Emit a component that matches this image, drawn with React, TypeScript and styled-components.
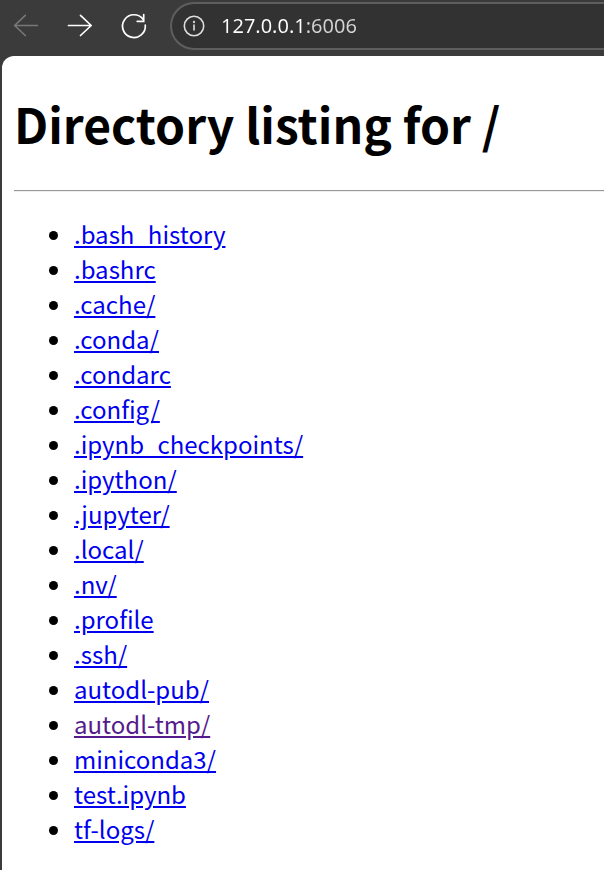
import React from "react";
import styled, { createGlobalStyle } from "styled-components";

const GlobalStyle = createGlobalStyle`
  * { box-sizing: border-box; }
  body { margin: 0; background: #3b3b3b; }
`;

const Browser = styled.div`
  display: flex;
  flex-direction: column;
  min-height: 100vh;
  overflow: hidden;
`;

const Toolbar = styled.header`
  display: flex;
  align-items: center;
  height: 56px;
  padding-left: 12px;
  padding-bottom: 4px;
  gap: 26px;
`;

const IconButton = styled.button`
  display: flex;
  padding: 0;
  border: 0;
  background: none;
  color: #fff;
  &:disabled { color: #777; }
`;

const AddressBar = styled.label`
  display: flex;
  flex: 1;
  align-items: center;
  gap: 16px;
  height: 48px;
  margin-left: -4px;
  padding-left: 11px;
  border: 2px solid #5e5e5e;
  border-right: 0;
  border-radius: 24px 0 0 24px;
  background: #323232;
  color: #ddd;
`;

const Address = styled.input`
  flex: 1;
  min-width: 0;
  padding: 0;
  border: 0;
  outline: 0;
  background: linear-gradient(to right, #fff 83px, #d4d4d4 83px);
  background-clip: text;
  color: transparent;
  caret-color: #fff;
  font: 20px/28px "Noto Sans", "Open Sans", sans-serif;
`;

const Page = styled.main`
  flex: 1;
  margin-left: 2px;
  padding: 38px 0 20px 12px;
  border-top-left-radius: 12px;
  background: #fff;
  color: #000;
  font: 24px/35px "Noto Sans CJK SC", sans-serif;
`;

const Title = styled.h1`
  margin: 0 0 38px;
  font-size: 48px;
  line-height: 58px;
  font-weight: 700;
`;

const Rule = styled.hr`
  margin: 0 0 24px;
  border: 0;
  border-top: 1px solid #999;
  border-bottom: 1px solid #eee;
`;

const Listing = styled.ul`
  margin: 0;
  padding-left: 60px;
`;

const Entry = styled.a<{ $visited?: boolean }>`
  color: ${(p) => (p.$visited ? "#551a8b" : "#0000ee")};
`;

const entries = [
  ".bash_history", ".bashrc", ".cache/", ".conda/", ".condarc", ".config/",
  ".ipynb_checkpoints/", ".ipython/", ".jupyter/", ".local/", ".nv/", ".profile",
  ".ssh/", "autodl-pub/", "autodl-tmp/", "miniconda3/", "test.ipynb", "tf-logs/",
];

export default function App() {
  return (
    <Browser>
      <GlobalStyle />
      <Toolbar>
        <IconButton disabled aria-label="Back">
          <svg width="28" height="28" viewBox="0 0 28 28" fill="none" stroke="currentColor" strokeWidth="1.7" strokeLinecap="round" strokeLinejoin="round"><path d="M13.300 3.300 2.600 13.500l10.700 10M2.600 13.500h22.800" /></svg>
        </IconButton>
        <IconButton aria-label="Forward">
          <svg width="28" height="28" viewBox="0 0 28 28" fill="none" stroke="currentColor" strokeWidth="1.7" strokeLinecap="round" strokeLinejoin="round"><path d="m14.500 3.300 10.700 10.200-10.700 10M25.200 13.500H2.500" /></svg>
        </IconButton>
        <IconButton aria-label="Reload">
          <svg width="28" height="28" viewBox="0 0 28 28" fill="none" stroke="currentColor" strokeWidth="1.7" strokeLinecap="round"><path d="M25.300 13.200A11.400 11.400 0 1 1 23.200 7.500M23.700 2.600v6.700h-6.500" /></svg>
        </IconButton>
        <AddressBar>
          <svg width="22" height="22" viewBox="0 0 22 22" fill="none" stroke="currentColor" strokeWidth="1.6" strokeLinecap="round"><circle cx="11" cy="11" r="9.700" /><path d="M11 10v5" /><circle cx="11" cy="7" r="0.400" /></svg>
          <Address aria-label="Address" defaultValue="127.0.0.1:6006" />
        </AddressBar>
      </Toolbar>
      <Page>
        <Title>Directory listing for /</Title>
        <Rule />
        <Listing>
          {entries.map((name) => (
            <li key={name}>
              <Entry href={`#${name}`} $visited={name === "autodl-tmp/"}>{name}</Entry>
            </li>
          ))}
        </Listing>
      </Page>
    </Browser>
  );
}
